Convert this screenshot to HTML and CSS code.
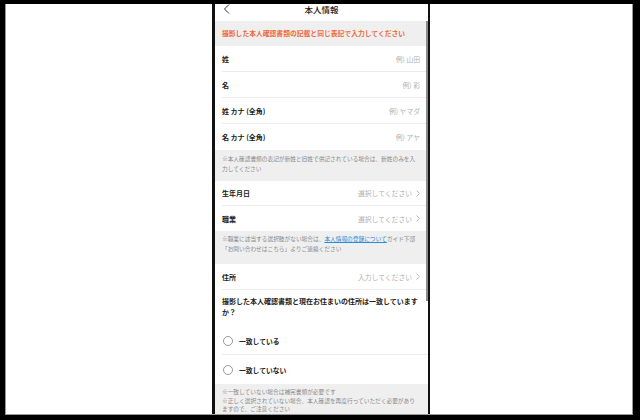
FILE: index.html
```html
<!DOCTYPE html>
<html lang="ja">
<head>
<meta charset="utf-8">
<title>本人情報</title>
<link rel="stylesheet" href="styles.css">
</head>
<body>
<div class="panel">
  <div class="phone">
    <div class="screen">
      <div class="header">
        <svg class="back" width="8" height="10" viewBox="0 0 8 10"><polyline points="6,0.5 1.5,5 6,9.5" fill="none" stroke="#333" stroke-width="1"/></svg>
        <span class="title">本人情報</span>
      </div>
      <div class="banner">撮影した本人確認書類の記載と同じ表記で入力してください</div>
      <div class="row"><span class="label">姓</span><span class="ph">例) 山田</span></div>
      <div class="row"><span class="label">名</span><span class="ph">例) 彩</span></div>
      <div class="row"><span class="label">姓 カナ (全角)</span><span class="ph">例) ヤマダ</span></div>
      <div class="row last"><span class="label">名 カナ (全角)</span><span class="ph">例) アヤ</span></div>
      <div class="note n1">※本人確認書類の表記が新姓と旧姓で併記されている場合は、新姓のみを入<br>力してください</div>
      <div class="row r25"><span class="label">生年月日</span><span class="ph">選択してください<svg class="chev" width="4" height="7" viewBox="0 0 4 7"><polyline points="0.5,0.5 3.5,3.5 0.5,6.5" fill="none" stroke="#aaa" stroke-width="0.8"/></svg></span></div>
      <div class="row r25 last"><span class="label">職業</span><span class="ph">選択してください<svg class="chev" width="4" height="7" viewBox="0 0 4 7"><polyline points="0.5,0.5 3.5,3.5 0.5,6.5" fill="none" stroke="#aaa" stroke-width="0.8"/></svg></span></div>
      <div class="note n2">※職業に該当する選択肢がない場合は、<span class="link">本人情報の登録について</span>ガイド下部<br>「お問い合わせはこちら」よりご連絡ください</div>
      <div class="row"><span class="label">住所</span><span class="ph">入力してください<svg class="chev" width="4" height="7" viewBox="0 0 4 7"><polyline points="0.5,0.5 3.5,3.5 0.5,6.5" fill="none" stroke="#aaa" stroke-width="0.8"/></svg></span></div>
      <div class="question">撮影した本人確認書類と現在お住まいの住所は一致していますか？</div>
      <div class="radio"><span class="circle"></span><span class="rlabel">一致している</span></div>
      <div class="radio last"><span class="circle"></span><span class="rlabel">一致していない</span></div>
      <div class="note n3">※一致していない場合は補完書類が必要です<br>※正しく選択されていない場合、本人確認を再度行っていただく必要があり<br>ますので、ご注意ください</div>
    </div>
    <div class="scrollbar"></div>
  </div>
</div>
</body>
</html>
```
FILE: styles.css
```css
html, body {
  margin: 0;
  padding: 0;
  background: #000;
  width: 640px;
  height: 420px;
  overflow: hidden;
}
body {
  padding-top: 4px;
  padding-left: 5px;
  box-sizing: border-box;
  font-family: "Noto Sans CJK JP", "Noto Sans", sans-serif;
  color: #222;
}
.panel {
  width: 628px;
  height: 411px;
  box-sizing: border-box;
  background: #fff;
  border-left: 1px solid #999;
  border-right: 1px solid #999;
  border-bottom: 1px solid #999;
  overflow: hidden;
}
.phone {
  position: relative;
  margin-left: 206px;
  width: 218px;
  height: 411px;
  box-sizing: border-box;
  border-left: 3px solid #111;
  border-right: 2px solid #111;
  background: #fff;
  overflow: hidden;
}
.screen {
  display: flex;
  flex-direction: column;
}
.header {
  height: 17px;
  position: relative;
  display: flex;
  justify-content: center;
  align-items: flex-start;
}
.back {
  position: absolute;
  left: 8px;
  top: 0;
}
.title {
  font-size: 8.5px;
  line-height: 10px;
  font-weight: 500;
  color: #222;
}
.banner {
  height: 25px;
  background: #efefef;
  color: #f0683a;
  font-size: 6.8px;
  font-weight: 700;
  display: flex;
  align-items: center;
  padding-left: 7px;
  padding-bottom: 1px;
  box-sizing: border-box;
  white-space: nowrap;
}
.row {
  height: 26px;
  margin-left: 7px;
  padding-right: 8px;
  display: flex;
  align-items: center;
  justify-content: space-between;
  border-bottom: 1px solid #ececec;
  box-sizing: border-box;
}
.row.r25 { height: 25px; }
.row.last { border-bottom: none; }
.label {
  font-size: 7px;
  font-weight: 700;
  color: #222;
  white-space: nowrap;
}
.ph {
  font-size: 6.8px;
  color: #b0b0b0;
  display: flex;
  align-items: center;
  white-space: nowrap;
}
.chev { margin-left: 4px; }
.note {
  background: #efefef;
  color: #8a8a8a;
  font-size: 5.7px;
  line-height: 10px;
  padding: 4px 0 7px 7px;
  white-space: nowrap;
}
.n2 { padding: 3px 0 10px 7px; }
.n3 { padding: 4px 0 10px 7px; line-height: 8.5px; }
.link {
  color: #2a8ad6;
  text-decoration: underline;
}
.question {
  font-size: 7px;
  font-weight: 700;
  line-height: 11px;
  padding: 6px 7px 9px 7px;
  color: #222;
}
.radio {
  height: 28px;
  margin-left: 7px;
  display: flex;
  align-items: center;
  border-bottom: 1px solid #ececec;
  box-sizing: border-box;
}
.radio.last { height: 29px; border-bottom: none; }
.circle {
  width: 10px;
  height: 10px;
  border: 1px solid #999;
  border-radius: 50%;
  box-sizing: border-box;
  margin-left: 1px;
}
.rlabel {
  margin-left: 6px;
  font-size: 6.8px;
  font-weight: 700;
  color: #222;
}
.scrollbar {
  position: absolute;
  right: 0;
  top: 17px;
  width: 2px;
  height: 280px;
  background: #8a8a8a;
}
```
